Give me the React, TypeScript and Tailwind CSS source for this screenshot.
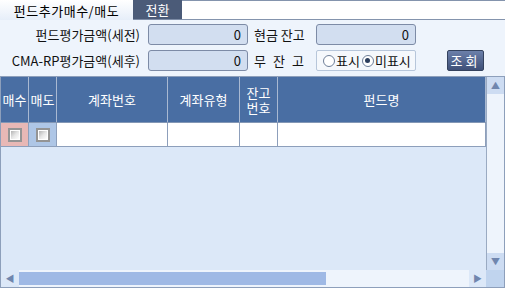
import type { ReactNode } from 'react';

const FONT = { fontFamily: '"Noto Sans CJK KR", "Noto Sans", sans-serif' };

function ValueBox({ value }: { value: string }) {
  return (
    <div className="flex h-[21px] w-[100px] items-center justify-end rounded-[3px] border border-[#7d8ba6] bg-[#d2def0] pr-[6px] text-[13px] leading-none text-[#111]">
      {value}
    </div>
  );
}

function Label({ children, className = '' }: { children: ReactNode; className?: string }) {
  return <div className={`text-[13px] leading-none text-[#111] ${className}`}>{children}</div>;
}

function Radio({ checked }: { checked?: boolean }) {
  return (
    <span className="inline-flex h-[12px] w-[12px] items-center justify-center rounded-full border border-[#6f7f99] bg-white">
      {checked && <span className="h-[5px] w-[5px] rounded-full bg-[#2c3e5c]" />}
    </span>
  );
}

function Check() {
  return (
    <span className="block h-[14px] w-[14px] border-2 border-[#949494] bg-white p-[1px]">
      <span className="block h-full w-full bg-gradient-to-br from-[#b4b4b4] via-[#e6e6e6] to-[#ffffff]" />
    </span>
  );
}

const COLS = [
  { w: 'w-[28px]', label: '매수', cell: 'bg-[#e8b8b6]', check: true },
  { w: 'w-[28px]', label: '매도', cell: 'bg-[#aec6e6]', check: true },
  { w: 'w-[111px]', label: '계좌번호', cell: 'bg-white' },
  { w: 'w-[72px]', label: '계좌유형', cell: 'bg-white' },
  { w: 'w-[38px]', label: '잔고\n번호', cell: 'bg-white' },
  { w: 'w-[208px]', label: '펀드명', cell: 'bg-white' },
];

export default function App() {
  return (
    <div className="flex h-[288px] w-[505px] flex-col overflow-hidden bg-[#eef4fc]" style={FONT}>
      {/* tabs */}
      <div className="flex h-[20px]">
        <div className="flex w-[133px] items-center justify-center bg-gradient-to-b from-[#ffffff] to-[#e6eef9] text-[13px] leading-none tracking-[0.5px] text-black">
          펀드추가매수/매도
        </div>
        <div className="flex w-[49px] items-center justify-center border-b border-[#7d8ca6] bg-[#4b5b78] text-[13px] leading-none text-white">
          전환
        </div>
        <div className="flex-1 border-t border-b border-[#8494ad] bg-white" />
      </div>

      {/* search form */}
      <div className="flex flex-col gap-[5px] pt-[4px]">
        <div className="flex items-center">
          <Label className="w-[140px] text-right">펀드평가금액(세전)</Label>
          <div className="ml-[8px]">
            <ValueBox value="0" />
          </div>
          <Label className="ml-[6px] w-[62px]">현금 잔고</Label>
          <ValueBox value="0" />
        </div>
        <div className="flex items-center">
          <Label className="w-[140px] text-right">CMA-RP평가금액(세후)</Label>
          <div className="ml-[8px]">
            <ValueBox value="0" />
          </div>
          <Label className="ml-[6px] w-[62px] tracking-[7px]">무잔고</Label>
          <div className="flex h-[21px] w-[100px] items-center gap-[1px] rounded-[2px] border border-[#b7c6da] bg-[#f5f8fc] pl-[6px] text-[13px] leading-none text-[#111]">
            <Radio />
            <span className="mr-[1px]">표시</span>
            <Radio checked />
            <span>미표시</span>
          </div>
          <button className="ml-[31px] flex h-[21px] w-[37px] items-center justify-center rounded-[2px] border border-[#34425e] bg-gradient-to-b from-[#6c80aa] to-[#3f5078] text-[13px] leading-none tracking-[3px] text-white">
            조회
          </button>
        </div>
      </div>

      {/* grid */}
      <div className="mt-[5px] flex flex-1 flex-col border border-[#8d9fbb]">
        <div className="flex flex-1">
          <div className="flex w-[485px] flex-col bg-[#dce8f8]">
            <div className="flex h-[46px] border-b border-[#8397b5] bg-[#496ea3]">
              {COLS.map((c, i) => (
                <div
                  key={i}
                  className={`${c.w} flex items-center justify-center whitespace-pre border-r border-[#a9b9d2] text-center text-[13px] leading-[15px] text-white`}
                >
                  {c.label}
                </div>
              ))}
            </div>
            <div className="flex h-[24px] border-b border-[#8d9fbb]">
              {COLS.map((c, i) => (
                <div key={i} className={`${c.w} ${c.cell} flex items-center justify-center border-r border-[#8d9fbb]`}>
                  {c.check && <Check />}
                </div>
              ))}
            </div>
            <div className="flex-1" />
          </div>
          {/* vertical scrollbar */}
          <div className="flex w-[18px] flex-col border-l border-[#9aaac2]">
            <div className="flex h-[17px] items-center justify-center bg-[#cddcf2] text-[9px] leading-none text-[#7086ae]">▲</div>
            <div className="flex-1 bg-[#eef4fc]" />
            <div className="flex h-[17px] items-center justify-center bg-[#cddcf2] text-[9px] leading-none text-[#7086ae]">▼</div>
          </div>
        </div>
        {/* horizontal scrollbar */}
        <div className="flex h-[17px]">
          <div className="flex w-[18px] items-center justify-center bg-[#dce8f8] text-[9px] leading-none text-[#7086ae]">◀</div>
          <div className="flex flex-1 items-center bg-[#eef4fc] py-[2px]">
            <div className="h-full w-[307px] bg-[#9fb9e5]" />
          </div>
          <div className="flex w-[17px] items-center justify-center bg-[#dce8f8] text-[9px] leading-none text-[#7086ae]">▶</div>
          <div className="w-[18px] bg-[#c0d4ee]" />
        </div>
      </div>
    </div>
  );
}
